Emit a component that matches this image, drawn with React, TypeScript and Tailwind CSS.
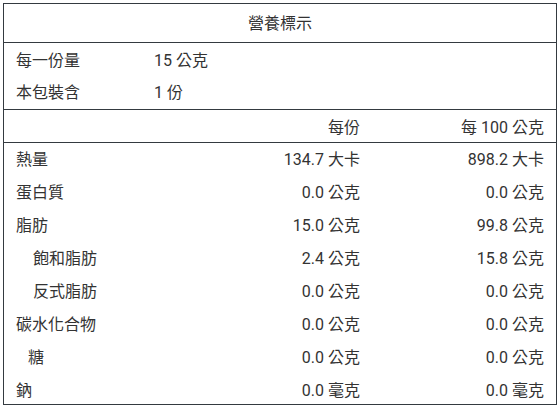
import React from "react";

const nutrients = [
  { name: "熱量", indent: "pl-3", perServing: "134.7 大卡", per100: "898.2 大卡" },
  { name: "蛋白質", indent: "pl-3", perServing: "0.0 公克", per100: "0.0 公克" },
  { name: "脂肪", indent: "pl-3", perServing: "15.0 公克", per100: "99.8 公克" },
  { name: "飽和脂肪", indent: "pl-[29px]", perServing: "2.4 公克", per100: "15.8 公克" },
  { name: "反式脂肪", indent: "pl-[29px]", perServing: "0.0 公克", per100: "0.0 公克" },
  { name: "碳水化合物", indent: "pl-3", perServing: "0.0 公克", per100: "0.0 公克" },
  { name: "糖", indent: "pl-[24px]", perServing: "0.0 公克", per100: "0.0 公克" },
  { name: "鈉", indent: "pl-3", perServing: "0.0 毫克", per100: "0.0 毫克" },
];

export default function App() {
  return (
    <div className="min-h-screen bg-white pl-[3px] pt-[3px] font-['Roboto','Noto_Sans_CJK_TC',sans-serif] text-[16px] text-[#333]">
      <div className="w-[554px] border border-[#343a40]">
        <div className="flex h-[39px] items-center justify-center border-b border-[#343a40] pt-[2px]">
          營養標示
        </div>

        <div className="border-b border-[#343a40] pt-[2px]">
          <div className="flex h-8 items-center">
            <span className="w-[150px] pl-3">每一份量</span>
            <span>15 公克</span>
          </div>
          <div className="flex h-8 items-center">
            <span className="w-[150px] pl-3">本包裝含</span>
            <span>1 份</span>
          </div>
        </div>

        <div className="flex h-[33px] items-center border-b border-[#343a40] pt-1">
          <span className="flex-1" />
          <span className="w-[150px] text-right">每份</span>
          <span className="w-[196px] pr-3 text-right">每 100 公克</span>
        </div>

        <div className="h-[261px] overflow-hidden">
          {nutrients.map((n) => (
            <div key={n.name} className="flex h-[33px] items-center">
              <span className={`flex-1 ${n.indent}`}>{n.name}</span>
              <span className="w-[150px] text-right">{n.perServing}</span>
              <span className="w-[196px] pr-3 text-right">{n.per100}</span>
            </div>
          ))}
        </div>
      </div>
    </div>
  );
}
